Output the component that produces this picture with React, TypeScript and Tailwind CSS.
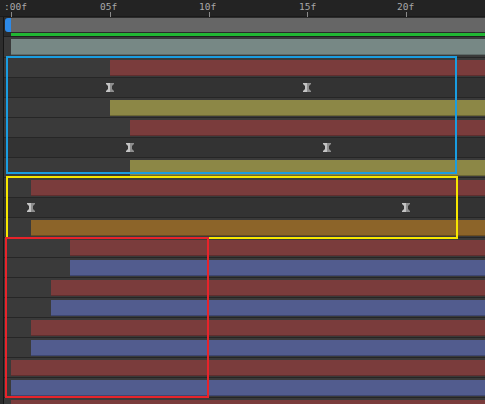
const PX_PER_FRAME = 19.75;
const ORIGIN = 7; // space inside the track before frame 0

type Row =
  | { kind: 'bar'; color: string; edge: string; start: number; tall?: boolean }
  | { kind: 'keys'; frames: number[] };

const red = { color: 'bg-[#7a3c3c]', edge: 'border-[#5e2e2e]' };
const olive = { color: 'bg-[#8c8746]', edge: 'border-[#6b6735]' };
const orange = { color: 'bg-[#8c6429]', edge: 'border-[#6b4c1f]' };
const blue = { color: 'bg-[#525c8e]', edge: 'border-[#3e4670]' };
const teal = { color: 'bg-[#778885]', edge: 'border-[#5e6b69]' };

const rows: Row[] = [
  { kind: 'bar', ...teal, start: 0, tall: true },
  { kind: 'bar', ...red, start: 5 },
  { kind: 'keys', frames: [5, 15] },
  { kind: 'bar', ...olive, start: 5 },
  { kind: 'bar', ...red, start: 6 },
  { kind: 'keys', frames: [6, 16] },
  { kind: 'bar', ...olive, start: 6 },
  { kind: 'bar', ...red, start: 1 },
  { kind: 'keys', frames: [1, 20] },
  { kind: 'bar', ...orange, start: 1 },
  { kind: 'bar', ...red, start: 3 },
  { kind: 'bar', ...blue, start: 3 },
  { kind: 'bar', ...red, start: 2 },
  { kind: 'bar', ...blue, start: 2 },
  { kind: 'bar', ...red, start: 1 },
  { kind: 'bar', ...blue, start: 1 },
  { kind: 'bar', ...red, start: 0 },
  { kind: 'bar', ...blue, start: 0 },
  { kind: 'bar', ...red, start: 0 },
];

const labels = [
  { text: ':00f', x: 4 },
  { text: '05f', x: 100 },
  { text: '10f', x: 199 },
  { text: '15f', x: 299 },
  { text: '20f', x: 397 },
];

const framePx = (f: number) => Math.round(ORIGIN + f * PX_PER_FRAME);

function Keyframe({ frame }: { frame: number }) {
  return (
    <svg
      width="8"
      height="9"
      viewBox="0 0 8 9"
      className="absolute top-[5px]"
      style={{ left: framePx(frame) - 4 }}
    >
      <path d="M0 0H4V9H0V8L2 6V3L0 1Z" fill="#c4c4c4" />
      <path d="M4 0H8V1L6 3V6L8 8V9H4Z" fill="#8e8e8e" />
    </svg>
  );
}

function LayerRow({ row }: { row: Row }) {
  if (row.kind === 'keys') {
    return (
      <div className="relative h-[20px] bg-[#333333] border-b border-[#262626]">
        {row.frames.map((f) => (
          <Keyframe key={f} frame={f} />
        ))}
      </div>
    );
  }
  return (
    <div className={`flex bg-[#3a3a3a] border-b border-[#262626] ${row.tall ? 'h-[21px]' : 'h-[20px]'}`}>
      <div className="shrink-0" style={{ width: framePx(row.start) }} />
      <div className={`flex-1 mt-[2px] h-[16px] border-b ${row.color} ${row.edge}`} />
    </div>
  );
}

export default function App() {
  return (
    <div className="relative w-[485px] h-[404px] overflow-hidden bg-[#2b2b2b] font-['DejaVu_Sans_Mono',monospace]">
      {/* time ruler */}
      <div className="relative h-[17px] bg-[#232323] border-b border-[#1a1a1a]">
        {labels.map((l) => (
          <span
            key={l.text}
            className="absolute top-[2px] text-[9.5px] leading-none text-[#a9a9a9]"
            style={{ left: l.x }}
          >
            {l.text}
          </span>
        ))}
        {labels.map((l, i) => (
          <div
            key={l.text + 't'}
            className="absolute top-[12px] w-px h-[5px] bg-[#8a8a8a]"
            style={{ left: 4 + framePx(i * 5) }}
          />
        ))}
      </div>

      <div className="flex">
        {/* left gutter */}
        <div className="w-[4px] shrink-0 bg-[#2d2d2d] border-r border-[#161616] self-stretch" />

        <div className="flex-1 flex flex-col">
          {/* work area bar */}
          <div className="flex h-[14px] mt-[1px]">
            <div className="w-[6px] ml-[1px] rounded-l-[3px] bg-[#2d8ae8]" />
            <div className="flex-1 bg-[#666666]" />
          </div>
          <div className="h-[1px]" />
          <div className="h-[3px] ml-[7px] bg-[#21b633]" />
          <div className="h-[1px] bg-[#1e1e1e]" />

          {rows.map((r, i) => (
            <LayerRow key={i} row={r} />
          ))}
        </div>
      </div>

      {/* highlight boxes */}
      <div className="absolute left-[6px] top-[56px] w-[451px] h-[118px] border-2 border-[#1a9de1]" />
      <div className="absolute left-[6px] top-[176px] w-[452px] h-[63px] border-2 border-[#f7e600]" />
      <div className="absolute left-[5px] top-[237px] w-[204px] h-[161px] border-2 border-[#e8232a]" />
    </div>
  );
}
